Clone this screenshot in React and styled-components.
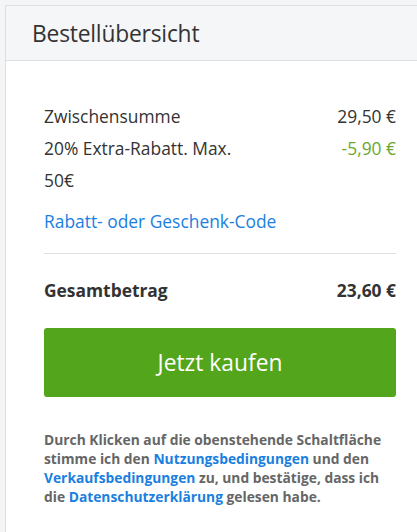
import styled, { createGlobalStyle } from "styled-components";

const GlobalStyle = createGlobalStyle`
  html, body {
    margin: 0;
    padding: 0;
    background: #f4f5f7;
    overflow: hidden;
  }
  body {
    font-family: "Open Sans", "Liberation Sans", sans-serif;
    color: #333;
  }
`;

const Page = styled.div`
  padding: 5px 0 0 5px;
`;

const Card = styled.section`
  width: 440px;
  background: #fff;
  border: 1px solid #dcdfe3;
  border-right: none;
  min-height: 540px;
`;

const Header = styled.header`
  background: #f5f6f8;
  border-bottom: 1px solid #dcdfe3;
  height: 54px;
  display: flex;
  align-items: center;
  padding-left: 26px;
`;

const Title = styled.h2`
  margin: 0;
  font-size: 22.8px;
  font-weight: 400;
  color: #333;
  letter-spacing: -0.2px;
`;

const Body = styled.div`
  width: 352px;
  padding: 39px 0 0 38px;
`;

const Row = styled.div`
  display: flex;
  justify-content: space-between;
  align-items: flex-start;
  font-size: 17.4px;
  line-height: 32px;
  font-weight: ${(p) => (p.$bold ? 700 : 400)};
  margin-top: ${(p) => p.$gap || "0"};
`;

const Label = styled.span`
  max-width: ${(p) => p.$max || "none"};
`;

const Value = styled.span`
  color: ${(p) => p.$color || "#333"};
  white-space: nowrap;
`;

const CodeLink = styled.a`
  display: block;
  margin-top: 13px;
  font-size: 17.4px;
  line-height: 24px;
  color: #1a7fe0;
  text-decoration: none;
`;

const Divider = styled.hr`
  border: none;
  border-top: 1px solid #dddfe2;
  margin: 20px 0 0;
`;

const BuyButton = styled.button`
  display: block;
  width: 100%;
  height: 69px;
  margin-top: 22px;
  border: none;
  border-radius: 3px;
  background: #53a51b;
  color: #fff;
  font-family: inherit;
  font-size: 22.8px;
  font-weight: 400;
  cursor: pointer;
`;

const Legal = styled.p`
  margin: 33px 0 0;
  font-size: 13.8px;
  line-height: 19px;
  font-weight: 700;
  color: #666;
`;

const LegalLink = styled.a`
  color: #1a7fe0;
  text-decoration: none;
`;

export default function App() {
  return (
    <>
      <GlobalStyle />
      <Page>
        <Card>
          <Header>
            <Title>Bestellübersicht</Title>
          </Header>
          <Body>
            <Row>
              <Label>Zwischensumme</Label>
              <Value>29,50 €</Value>
            </Row>
            <Row>
              <Label $max="210px">20% Extra-Rabatt. Max. 50€</Label>
              <Value $color="#6aa830">-5,90 €</Value>
            </Row>
            <CodeLink href="#">Rabatt- oder Geschenk-Code</CodeLink>
            <Divider />
            <Row $bold $gap="20px">
              <Label>Gesamtbetrag</Label>
              <Value>23,60 €</Value>
            </Row>
            <BuyButton>Jetzt kaufen</BuyButton>
            <Legal>
              Durch Klicken auf die obenstehende Schaltfläche stimme ich den{" "}
              <LegalLink href="#">Nutzungsbedingungen</LegalLink> und den{" "}
              <LegalLink href="#">Verkaufsbedingungen</LegalLink> zu, und
              bestätige, dass ich die{" "}
              <LegalLink href="#">Datenschutzerklärung</LegalLink> gelesen habe.
            </Legal>
          </Body>
        </Card>
      </Page>
    </>
  );
}
